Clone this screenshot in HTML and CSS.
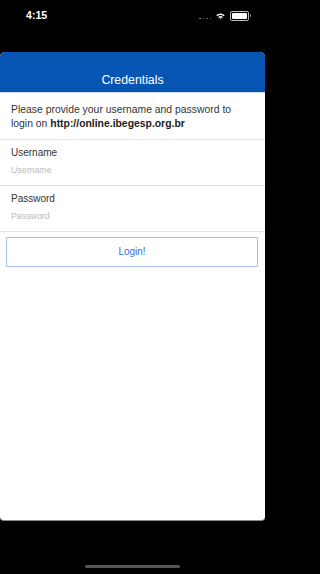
FILE: index.html
```html
<!DOCTYPE html>
<html lang="en">
<head>
<meta charset="utf-8">
<title>Credentials</title>
<link rel="stylesheet" href="styles.css">
</head>
<body>
<div class="phone">
  <div class="status">
    <span class="time">4:15</span>
    <div class="status-icons">
      <span class="dots"><i></i><i></i><i></i><i></i></span>
      <svg class="wifi" width="9" height="7" viewBox="0 0 9 7">
        <path d="M0.3 2.3 A6 6 0 0 1 8.7 2.3 L7.7 3.3 A4.6 4.6 0 0 0 1.3 3.3 Z" fill="#fff"/>
        <path d="M2.1 4.1 A3.4 3.4 0 0 1 6.9 4.1 L5.9 5.1 A2 2 0 0 0 3.1 5.1 Z" fill="#fff"/>
        <path d="M3.7 5.7 A1.1 1.1 0 0 1 5.3 5.7 L4.5 6.6 Z" fill="#fff"/>
      </svg>
      <span class="battery"><span class="battery-fill"></span></span>
    </div>
  </div>
  <div class="sheet">
    <div class="header"><span class="title">Credentials</span></div>
    <div class="intro">
      <div>Please provide your username and password to</div>
      <div>login on <b>http://online.ibegesp.org.br</b></div>
    </div>
    <div class="field">
      <div class="label">Username</div>
      <div class="placeholder">Username</div>
    </div>
    <div class="field">
      <div class="label">Password</div>
      <div class="placeholder">Password</div>
    </div>
    <div class="actions">
      <div class="button">Login!</div>
    </div>
  </div>
  <div class="home-bar"><span class="home-indicator"></span></div>
</div>
</body>
</html>
```
FILE: styles.css
```css
html, body {
  margin: 0;
  padding: 0;
  background: #000;
}
body {
  font-family: "Liberation Sans", Arial, sans-serif;
  width: 265px;
  height: 574px;
  overflow: hidden;
}
.phone {
  display: flex;
  flex-direction: column;
  height: 574px;
}
.status {
  height: 52px;
  display: flex;
  justify-content: space-between;
  align-items: flex-start;
  padding: 0 14px 0 26px;
  box-sizing: border-box;
}
.time {
  color: #fff;
  font-weight: bold;
  font-size: 10.6px;
  line-height: 12px;
  margin-top: 9px;
}
.status-icons {
  display: flex;
  align-items: center;
  gap: 5px;
  margin-top: 11px;
}
.dots {
  display: flex;
  gap: 2px;
  margin-top: 5px;
}
.dots i {
  width: 1.5px;
  height: 1.5px;
  background: #777;
  border-radius: 50%;
}
.wifi {
  display: block;
}
.battery {
  position: relative;
  width: 15px;
  height: 6px;
  border: 1px solid #bbb;
  border-radius: 2px;
  padding: 1px;
  box-sizing: content-box;
  margin-right: 2px;
}
.battery::after {
  content: "";
  position: absolute;
  right: -3px;
  top: 2px;
  width: 1.5px;
  height: 3px;
  background: #999;
  border-radius: 0 1px 1px 0;
}
.battery-fill {
  display: block;
  width: 100%;
  height: 100%;
  background: #fff;
  border-radius: 1px;
}
.sheet {
  height: 469px;
  background: #fff;
  border-radius: 5px 5px 4px 4px;
  overflow: hidden;
  border-bottom: 1px solid #888;
  box-sizing: border-box;
}
.header {
  height: 41px;
  background: #0755b3;
  border-bottom: 1px solid #cfe0f2;
  display: flex;
  justify-content: center;
  align-items: flex-end;
  padding-bottom: 5px;
  box-sizing: border-box;
}
.title {
  color: #fff;
  font-size: 12.3px;
  line-height: 14px;
}
.intro {
  padding: 10px 11px 9px;
  font-size: 10.4px;
  line-height: 13.5px;
  color: #333;
  border-bottom: 1px solid #e3e3e3;
  white-space: nowrap;
}
.intro b {
  color: #222;
}
.field {
  padding: 7.4px 11px 9.1px;
  border-bottom: 1px solid #e3e3e3;
}
.label {
  font-size: 10px;
  line-height: 12px;
  color: #333;
}
.placeholder {
  margin-top: 5.5px;
  font-size: 8.8px;
  line-height: 11px;
  color: #b9b9b9;
}
.actions {
  padding: 5px 7px 0 6px;
}
.button {
  height: 30px;
  box-sizing: border-box;
  border: 1px solid #a9c0ee;
  border-radius: 1px;
  box-shadow: 0 0 1px rgba(120, 150, 220, 0.35);
  display: flex;
  align-items: center;
  justify-content: center;
  font-size: 10px;
  color: #3d6fd6;
}
.home-bar {
  flex: 1;
  display: flex;
  justify-content: center;
  align-items: flex-end;
  padding-bottom: 6px;
}
.home-indicator {
  width: 95px;
  height: 3px;
  border-radius: 2px;
  background: #555;
}
```
